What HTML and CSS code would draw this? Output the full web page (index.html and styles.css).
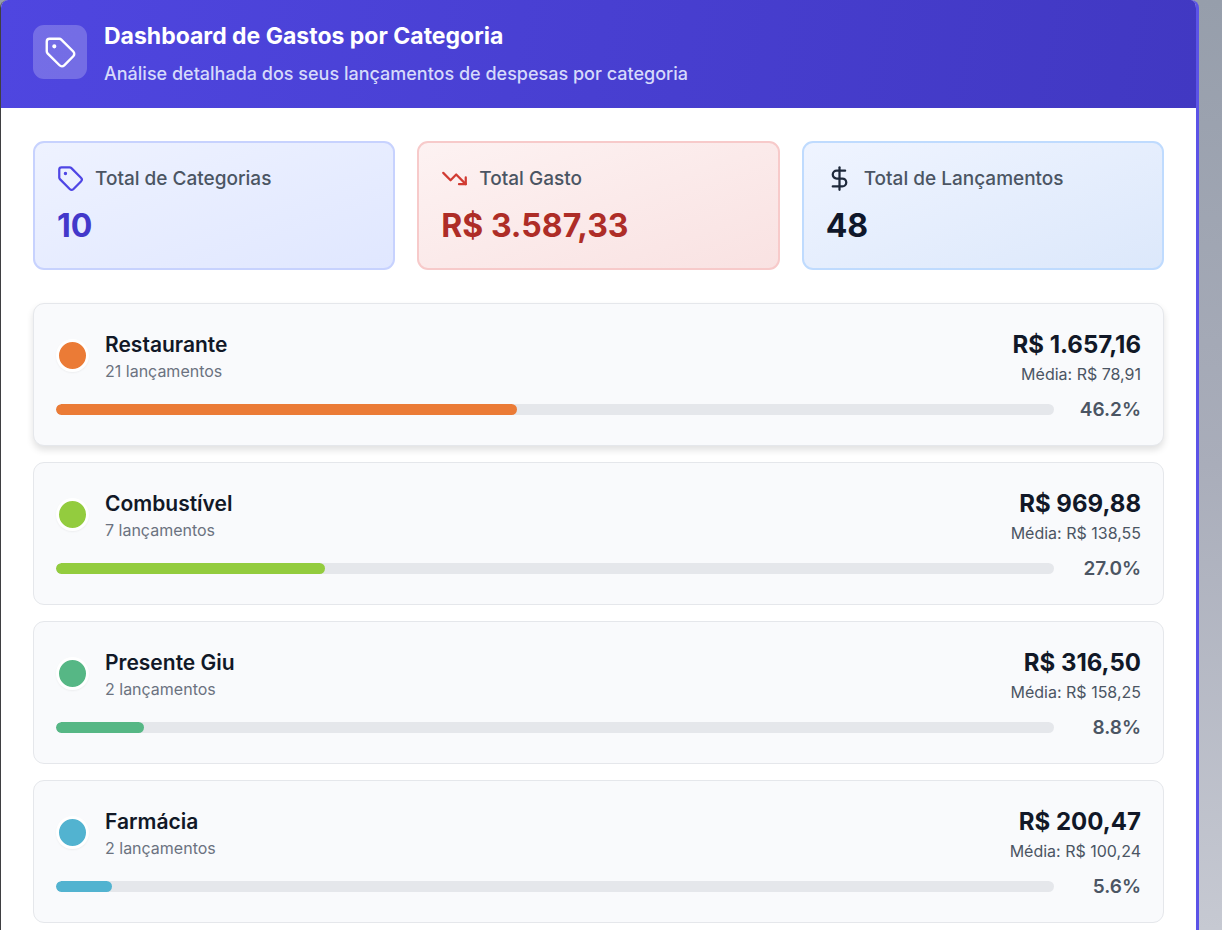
FILE: index.html
```html
<!DOCTYPE html>
<html lang="pt-BR">
<head>
    <meta charset="UTF-8">
    <meta name="viewport" content="width=device-width, initial-scale=1.0">
    <title>Dashboard de Gastos por Categoria</title>
    <link rel="stylesheet" href="styles.css">
</head>
<body>
    <main class="panel">
        <header class="panel-header">
            <div class="header-icon">
                <svg class="icon-large" viewBox="0 0 24 24" aria-hidden="true">
                    <path d="M12.586 2.586A2 2 0 0 0 11.172 2H4a2 2 0 0 0-2 2v7.172a2 2 0 0 0 .586 1.414l8.704 8.704a2.426 2.426 0 0 0 3.42 0l6.58-6.58a2.426 2.426 0 0 0 0-3.42z"/>
                    <circle class="icon-dot" cx="7.5" cy="7.5" r="1"/>
                </svg>
            </div>
            <div class="header-text">
                <h1>Dashboard de Gastos por Categoria</h1>
                <p>Análise detalhada dos seus lançamentos de despesas por categoria</p>
            </div>
        </header>

        <div class="panel-body">
            <section class="stats">
                <div class="stat stat-indigo">
                    <div class="stat-label">
                        <svg class="icon" viewBox="0 0 24 24" aria-hidden="true">
                            <path d="M12.586 2.586A2 2 0 0 0 11.172 2H4a2 2 0 0 0-2 2v7.172a2 2 0 0 0 .586 1.414l8.704 8.704a2.426 2.426 0 0 0 3.42 0l6.58-6.58a2.426 2.426 0 0 0 0-3.42z"/>
                            <circle class="icon-dot" cx="7.5" cy="7.5" r="1"/>
                        </svg>
                        <span>Total de Categorias</span>
                    </div>
                    <p class="stat-value">10</p>
                </div>
                <div class="stat stat-red">
                    <div class="stat-label">
                        <svg class="icon" viewBox="0 0 24 24" aria-hidden="true">
                            <path d="M22 17l-8.5-8.5-5 5L2 7"/>
                            <path d="M16 17h6v-6"/>
                        </svg>
                        <span>Total Gasto</span>
                    </div>
                    <p class="stat-value">R$ 3.587,33</p>
                </div>
                <div class="stat stat-blue">
                    <div class="stat-label">
                        <svg class="icon" viewBox="0 0 24 24" aria-hidden="true">
                            <path d="M12 2v20"/>
                            <path d="M17 5H9.500a3.500 3.500 0 0 0 0 7h5a3.500 3.500 0 0 1 0 7H6"/>
                        </svg>
                        <span>Total de Lançamentos</span>
                    </div>
                    <p class="stat-value">48</p>
                </div>
            </section>

            <ul class="categories">
                <li class="category category-active orange">
                    <div class="category-head">
                        <span class="dot"></span>
                        <div class="category-info">
                            <h2>Restaurante</h2>
                            <p>21 lançamentos</p>
                        </div>
                        <div class="category-total">
                            <strong>R$ 1.657,16</strong>
                            <p>Média: R$ 78,91</p>
                        </div>
                    </div>
                    <div class="progress">
                        <div class="track"><div class="bar" style="width: 46.2%"></div></div>
                        <span class="percent">46.2%</span>
                    </div>
                </li>
                <li class="category green">
                    <div class="category-head">
                        <span class="dot"></span>
                        <div class="category-info">
                            <h2>Combustível</h2>
                            <p>7 lançamentos</p>
                        </div>
                        <div class="category-total">
                            <strong>R$ 969,88</strong>
                            <p>Média: R$ 138,55</p>
                        </div>
                    </div>
                    <div class="progress">
                        <div class="track"><div class="bar" style="width: 27%"></div></div>
                        <span class="percent">27.0%</span>
                    </div>
                </li>
                <li class="category teal">
                    <div class="category-head">
                        <span class="dot"></span>
                        <div class="category-info">
                            <h2>Presente Giu</h2>
                            <p>2 lançamentos</p>
                        </div>
                        <div class="category-total">
                            <strong>R$ 316,50</strong>
                            <p>Média: R$ 158,25</p>
                        </div>
                    </div>
                    <div class="progress">
                        <div class="track"><div class="bar" style="width: 8.8%"></div></div>
                        <span class="percent">8.8%</span>
                    </div>
                </li>
                <li class="category sky">
                    <div class="category-head">
                        <span class="dot"></span>
                        <div class="category-info">
                            <h2>Farmácia</h2>
                            <p>2 lançamentos</p>
                        </div>
                        <div class="category-total">
                            <strong>R$ 200,47</strong>
                            <p>Média: R$ 100,24</p>
                        </div>
                    </div>
                    <div class="progress">
                        <div class="track"><div class="bar" style="width: 5.6%"></div></div>
                        <span class="percent">5.6%</span>
                    </div>
                </li>
            </ul>
        </div>
    </main>
</body>
</html>
```

FILE: styles.css
```css
* {
    box-sizing: border-box;
}
body {
    margin: 0;
    padding-right: 23px;
    height: 100vh;
    overflow: hidden;
    font-family: Inter, "Liberation Sans", sans-serif;
    color: #111827;
    background: linear-gradient(#969eab, #a9adba 50%, #c6c9d2);
}
h1, h2, p, ul {
    margin: 0;
    padding: 0;
}
.panel {
    min-height: 100vh;
    border-left: 1px solid #3f3f42;
    border-right: 3px solid #5b53e7;
    border-radius: 8px 8px 0 0;
    background: #fff;
    overflow: hidden;
}

/* header */
.panel-header {
    display: flex;
    align-items: center;
    gap: 17px;
    padding: 16px 32px 20px;
    color: #fff;
    background: linear-gradient(100deg, #4f46e0, #4138c2);
}
.header-icon {
    display: flex;
    align-items: center;
    justify-content: center;
    width: 54px;
    height: 54px;
    border-radius: 11px;
    background: rgba(255, 255, 255, 0.22);
}
.header-text h1 {
    margin-bottom: 4px;
    font-size: 23px;
    line-height: 40px;
    font-weight: 700;
}
.header-text p {
    font-size: 18px;
    line-height: 28px;
    font-weight: 500;
    color: #d6dafb;
}
.icon, .icon-large {
    flex: none;
    width: 27px;
    height: 27px;
    fill: none;
    stroke: currentColor;
    stroke-width: 2;
    stroke-linecap: round;
    stroke-linejoin: round;
}
.icon-large {
    width: 33px;
    height: 33px;
    stroke-width: 1.75;
}
.icon-dot {
    fill: currentColor;
    stroke-width: 1;
}

/* stat cards */
.panel-body {
    padding: 33px 32px;
}
.stats {
    display: grid;
    grid-template-columns: repeat(3, 1fr);
    gap: 22px;
    margin-bottom: 33px;
}
.stat {
    padding: 22px;
    border: 2px solid;
    border-radius: 11px;
}
.stat-label {
    display: flex;
    align-items: center;
    gap: 11px;
    margin-bottom: 13px;
    font-size: 19px;
    line-height: 27px;
    font-weight: 500;
}
.stat-label span {
    color: #4b5563;
}
.stat-value {
    font-size: 32px;
    line-height: 41px;
    font-weight: 700;
}
.stat-indigo {
    color: #4f46e5;
    border-color: #c7d2fe;
    background: linear-gradient(to bottom right, #eef2ff, #e0e7ff);
}
.stat-indigo .stat-value {
    color: #4338ca;
}
.stat-red {
    color: #d13b32;
    border-color: #f7caca;
    background: linear-gradient(to bottom right, #fdf2f2, #f9e2e2);
}
.stat-red .stat-value {
    color: #ae2d27;
}
.stat-blue {
    color: #1e293b;
    border-color: #bfdbfe;
    background: linear-gradient(to bottom right, #eff4ff, #dce8fb);
}
.stat-blue .stat-value {
    color: #0f172a;
}

/* category list */
.categories {
    display: flex;
    flex-direction: column;
    gap: 16px;
    list-style: none;
}
.category {
    padding: 22px 22px 23px;
    border: 1px solid #e5e7eb;
    border-radius: 11px;
    background: #f9fafc;
}
.category-active {
    box-shadow: 0 4px 7px rgba(0, 0, 0, 0.12);
}
.category-head {
    display: flex;
    align-items: center;
    gap: 16px;
    margin-bottom: 12px;
}
.dot {
    width: 33px;
    height: 33px;
    border: 3px solid #fff;
    border-radius: 50%;
    box-shadow: 0 1px 2px rgba(0, 0, 0, 0.05);
}
.category-info {
    flex: 1;
}
.category-info h2 {
    font-size: 21px;
    line-height: 31px;
    font-weight: 600;
}
.category-info p {
    font-size: 16px;
    line-height: 22px;
    color: #6b7280;
}
.category-total {
    text-align: right;
}
.category-total strong {
    display: block;
    font-size: 24px;
    line-height: 37px;
    font-weight: 700;
}
.category-total p {
    font-size: 16px;
    line-height: 22px;
    color: #4b5563;
}
.progress {
    display: flex;
    align-items: center;
    gap: 22px;
}
.track {
    flex: 1;
    height: 11px;
    border-radius: 6px;
    background: #e5e7eb;
    overflow: hidden;
}
.bar {
    height: 100%;
    border-radius: 6px;
}
.percent {
    width: 65px;
    font-size: 19px;
    line-height: 25px;
    font-weight: 600;
    text-align: right;
    color: #4b5563;
}
.orange .dot, .orange .bar {
    background-color: #eb7b36;
}
.green .dot, .green .bar {
    background-color: #93cc3e;
}
.teal .dot, .teal .bar {
    background-color: #56b785;
}
.sky .dot, .sky .bar {
    background-color: #52b3d0;
}
```
